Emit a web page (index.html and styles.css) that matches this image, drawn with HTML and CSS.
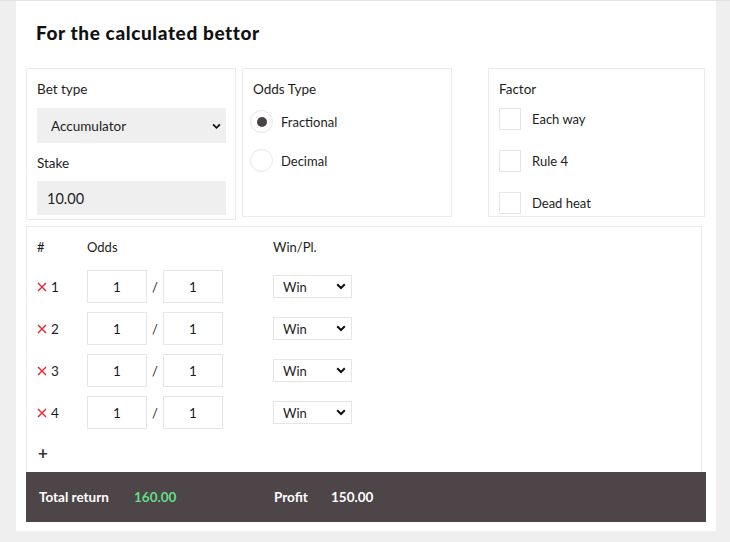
FILE: index.html
```html
<!DOCTYPE html>
<html lang="en">
<head>
<meta charset="utf-8">
<title>For the calculated bettor</title>
<link rel="stylesheet" href="styles.css">
</head>
<body>
<div class="page">
  <div class="card">
    <h1 class="title">For the calculated bettor</h1>
    <div class="panels">
      <div class="panel panel-bet">
        <div class="label">Bet type</div>
        <div class="select-wrap select-grey">
          <select class="select select-bet"><option>Accumulator</option></select>
          <svg class="chev" viewBox="0 0 10 7" width="9" height="7"><path d="M1.2 1.2 5 5 8.8 1.2" fill="none" stroke="#111" stroke-width="2"/></svg>
        </div>
        <div class="label label-stake">Stake</div>
        <input class="stake" type="text" value="10.00">
      </div>
      <div class="panel panel-odds">
        <div class="label">Odds Type</div>
        <div class="radio-row first"><span class="radio checked"></span><span class="opt">Fractional</span></div>
        <div class="radio-row"><span class="radio"></span><span class="opt">Decimal</span></div>
      </div>
      <div class="panel panel-factor">
        <div class="label">Factor</div>
        <div class="check-row first"><span class="check"></span><span class="opt">Each way</span></div>
        <div class="check-row"><span class="check"></span><span class="opt">Rule 4</span></div>
        <div class="check-row"><span class="check"></span><span class="opt">Dead heat</span></div>
      </div>
    </div>
    <div class="table-panel">
      <div class="trow thead">
        <div class="c-num">#</div>
        <div class="c-odds">Odds</div>
        <div class="c-win">Win/Pl.</div>
      </div>
      <div class="trow sel">
        <div class="c-num"><svg class="x" viewBox="0 0 10 10" width="10" height="10"><path d="M1 1 9 9M9 1 1 9" stroke="#e3262d" stroke-width="1.4"/></svg>1</div>
        <div class="c-odds"><input class="odd" value="1"><span class="slash">/</span><input class="odd" value="1"></div>
        <div class="c-win"><div class="select-wrap"><select class="select select-win"><option>Win</option></select><svg class="chev chev-win" viewBox="0 0 10 7" width="10" height="7"><path d="M1.2 1.2 5 5 8.8 1.2" fill="none" stroke="#111" stroke-width="2"/></svg></div></div>
      </div>
      <div class="trow sel">
        <div class="c-num"><svg class="x" viewBox="0 0 10 10" width="10" height="10"><path d="M1 1 9 9M9 1 1 9" stroke="#e3262d" stroke-width="1.4"/></svg>2</div>
        <div class="c-odds"><input class="odd" value="1"><span class="slash">/</span><input class="odd" value="1"></div>
        <div class="c-win"><div class="select-wrap"><select class="select select-win"><option>Win</option></select><svg class="chev chev-win" viewBox="0 0 10 7" width="10" height="7"><path d="M1.2 1.2 5 5 8.8 1.2" fill="none" stroke="#111" stroke-width="2"/></svg></div></div>
      </div>
      <div class="trow sel">
        <div class="c-num"><svg class="x" viewBox="0 0 10 10" width="10" height="10"><path d="M1 1 9 9M9 1 1 9" stroke="#e3262d" stroke-width="1.4"/></svg>3</div>
        <div class="c-odds"><input class="odd" value="1"><span class="slash">/</span><input class="odd" value="1"></div>
        <div class="c-win"><div class="select-wrap"><select class="select select-win"><option>Win</option></select><svg class="chev chev-win" viewBox="0 0 10 7" width="10" height="7"><path d="M1.2 1.2 5 5 8.8 1.2" fill="none" stroke="#111" stroke-width="2"/></svg></div></div>
      </div>
      <div class="trow sel">
        <div class="c-num"><svg class="x" viewBox="0 0 10 10" width="10" height="10"><path d="M1 1 9 9M9 1 1 9" stroke="#e3262d" stroke-width="1.4"/></svg>4</div>
        <div class="c-odds"><input class="odd" value="1"><span class="slash">/</span><input class="odd" value="1"></div>
        <div class="c-win"><div class="select-wrap"><select class="select select-win"><option>Win</option></select><svg class="chev chev-win" viewBox="0 0 10 7" width="10" height="7"><path d="M1.2 1.2 5 5 8.8 1.2" fill="none" stroke="#111" stroke-width="2"/></svg></div></div>
      </div>
      <div class="add">+</div>
    </div>
    <div class="totals">
      <span class="t-label">Total return</span>
      <span class="t-green">160.00</span>
      <span class="t-label t-profit">Profit</span>
      <span class="t-val">150.00</span>
    </div>
  </div>
</div>
</body>
</html>
```

FILE: styles.css
```css
* { box-sizing: border-box; }

html, body {
  margin: 0;
  padding: 0;
  background: #efefef;
  font-family: "Lato", "Liberation Sans", sans-serif;
  color: #1d1d1d;
}

.page {
  border-top: 1px solid #e3e3e3;
  height: 542px;
}

.card {
  margin-left: 16px;
  width: 700px;
  height: 530px;
  background: #fff;
  padding: 0 10px;
}

.title {
  margin: 0;
  padding: 21px 0 0 10px;
  height: 67px;
  font-size: 19px;
  font-weight: 900;
  letter-spacing: 0.6px;
  line-height: 22px;
  color: #111;
}

.panels {
  display: flex;
  align-items: flex-start;
}

.panel {
  border: 1px solid #ebebeb;
  background: #fff;
}

.label {
  font-size: 13.5px;
  line-height: 20px;
  color: #1d1d1d;
}

.panel-bet {
  width: 210px;
  height: 152px;
  padding: 10px 10px 0 10px;
  margin-right: 6px;
}

.select-wrap {
  position: relative;
  display: block;
}

.select {
  -webkit-appearance: none;
  appearance: none;
  font-family: inherit;
  color: #1d1d1d;
  outline: none;
  border-radius: 0;
}

.select-bet {
  display: block;
  margin-top: 9px;
  width: 189px;
  height: 35px;
  border: none;
  background: #efefef;
  font-size: 13.5px;
  padding: 0 0 0 14px;
}

.chev {
  position: absolute;
  right: 4px;
  top: 15px;
  pointer-events: none;
}

.label-stake {
  margin-top: 10px;
}

.stake {
  display: block;
  margin-top: 8px;
  width: 189px;
  height: 34px;
  border: none;
  background: #efefef;
  font-family: inherit;
  font-size: 14.5px;
  color: #1d1d1d;
  padding: 0 0 0 10px;
  outline: none;
}

.panel-odds {
  width: 210px;
  height: 149px;
  padding: 10px;
  margin-right: 36px;
}

.radio-row {
  display: flex;
  align-items: center;
  margin-left: -3px;
  margin-top: 16px;
  height: 23px;
}

.radio-row.first { margin-top: 11px; }

.radio {
  width: 23px;
  height: 23px;
  border: 1px solid #e6e6e6;
  border-radius: 50%;
  display: flex;
  align-items: center;
  justify-content: center;
  margin-right: 8px;
  flex: none;
}

.radio.checked::after {
  content: "";
  width: 10px;
  height: 10px;
  border-radius: 50%;
  background: #4a4346;
}

.opt {
  font-size: 13px;
  color: #1d1d1d;
}

.panel-factor {
  width: 217px;
  height: 149px;
  padding: 10px;
}

.check-row {
  display: flex;
  align-items: center;
  margin-top: 20px;
  height: 22px;
}

.check-row.first { margin-top: 9px; }

.check {
  width: 22px;
  height: 22px;
  border: 1px solid #e6e6e6;
  margin-right: 11px;
  flex: none;
}

.table-panel {
  margin-top: 6px;
  width: 676px;
  height: 246px;
  border: 1px solid #ebebeb;
  border-bottom: none;
  padding: 10px 10px 0 10px;
}

.trow {
  display: flex;
  align-items: center;
}

.thead {
  height: 20px;
  font-size: 13px;
}

.trow.sel {
  height: 33px;
  margin-top: 9px;
  font-size: 13.5px;
}

.thead + .trow.sel { margin-top: 13px; }

.c-num {
  width: 50px;
  display: flex;
  align-items: center;
}

.x {
  margin-right: 4px;
}

.c-odds {
  width: 186px;
  display: flex;
  align-items: center;
}

.odd {
  width: 60px;
  height: 33px;
  border: 1px solid #e6e6e6;
  text-align: center;
  font-family: inherit;
  font-size: 13.5px;
  color: #1d1d1d;
  padding: 0;
  outline: none;
}

.slash {
  width: 16px;
  text-align: center;
  font-size: 13px;
}

.c-win .select-wrap {
  width: 79px;
}

.select-win {
  display: block;
  width: 79px;
  height: 23px;
  border: 1px solid #e6e6e6;
  background: #fff;
  font-size: 13px;
  padding: 0 0 0 9px;
}

.chev-win {
  right: 6px;
  top: 8px;
}

.add {
  margin-top: 14px;
  padding-left: 1px;
  font-size: 17px;
  font-weight: 700;
  line-height: 20px;
  color: #333;
}

.totals {
  width: 680px;
  height: 50px;
  background: #4d4548;
  display: flex;
  align-items: center;
  padding-left: 13px;
  font-size: 13.5px;
  font-weight: 700;
  color: #fff;
}

.t-label { width: 95px; }

.t-green {
  color: #62de85;
  width: 140px;
}

.t-profit { width: 57px; }

.t-val { color: #fff; }
```
